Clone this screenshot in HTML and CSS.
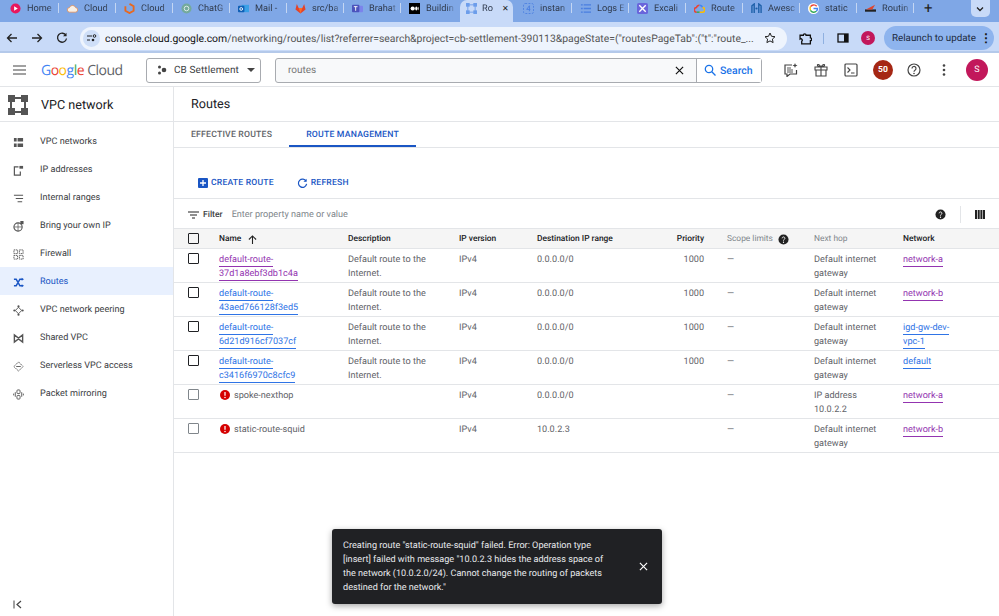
FILE: index.html
```html
<!DOCTYPE html>
<html>
<head>
	<title>Routes - VPC network</title>
	<link rel="stylesheet" href="styles.css">
</head>
<body>
	<!-- browser tabs -->
	<div class="tab-strip">
		<div class="tab"><svg class="fav" viewBox="0 0 12 12"><circle cx="6" cy="6" r="5.5" fill="#e8175d"/><path d="M4.5 3.5 8.5 6l-4 2.500z" fill="#fff"/></svg><span class="tab-name">Home</span></div>
		<div class="tab"><svg class="fav" viewBox="0 0 12 12"><path d="M3 10a2.500 2.500 0 0 1-.3-5A3.500 3.500 0 0 1 9.300 5 2.500 2.500 0 0 1 9 10z" fill="#f6f0e8" stroke="#e98b4a" stroke-width=".8"/></svg><span class="tab-name">Cloud</span></div>
		<div class="tab"><svg class="fav" viewBox="0 0 12 12"><path d="M6 1 10.500 3.500V8.500L6 11 1.500 8.500V3.500" fill="none" stroke="#e8681e" stroke-width="2"/></svg><span class="tab-name">Cloud</span></div>
		<div class="tab"><svg class="fav" viewBox="0 0 12 12"><circle cx="6" cy="6" r="5.500" fill="#74aa9c"/><circle cx="6" cy="6" r="2.500" fill="none" stroke="#e4f0ec"/></svg><span class="tab-name">ChatG</span></div>
		<div class="tab"><svg class="fav" viewBox="0 0 12 12"><rect x="4" y="2" width="8" height="8" fill="#3ba0e6"/><rect y="3" width="7" height="7" rx="1" fill="#0f5fb5"/><circle cx="3.500" cy="6.500" r="1.500" fill="none" stroke="#fff"/></svg><span class="tab-name">Mail -</span></div>
		<div class="tab"><svg class="fav" viewBox="0 0 12 12"><path d="M6 11.500 .5 7 2 1l2 4.500h4L10 1l1.500 6z" fill="#e24329"/><path d="M6 11.500 4 5.500h4z" fill="#fc6d26"/></svg><span class="tab-name">src/ba</span></div>
		<div class="tab"><svg class="fav" viewBox="0 0 12 12"><rect x="6" y="3" width="6" height="7" rx="1" fill="#7b83eb"/><rect y="2" width="8" height="8" rx="1" fill="#4b53bc"/><path d="M2 4h4M4 4v4.500" stroke="#fff"/></svg><span class="tab-name">Brahat</span></div>
		<div class="tab tab-last"><svg class="fav" viewBox="0 0 12 12"><rect width="12" height="12" fill="#000"/><circle cx="4" cy="6" r="2.300" fill="#fff"/><ellipse cx="8" cy="6" rx="1.200" ry="2.200" fill="#fff"/><ellipse cx="10" cy="6" rx=".5" ry="2" fill="#fff"/></svg><span class="tab-name">Buildin</span></div>
		<div class="tab tab-active"><svg class="fav" viewBox="0 0 12 12"><g fill="#6d9eeb"><rect width="4" height="4"/><rect x="8" width="4" height="4"/><rect y="8" width="4" height="4"/><rect x="8" y="8" width="4" height="4"/></g><path d="M2 2h8v8H2z" fill="none" stroke="#6d9eeb"/></svg><span class="tab-name short">Ro</span><span class="tab-close">✕</span></div>
		<div class="tab"><svg class="fav" viewBox="0 0 12 12"><rect x=".5" y=".5" width="11" height="11" rx="2" fill="none" stroke="#4a7fe0" stroke-dasharray="2 1.500"/><path d="M7 3 4 7h4M7 3v6" fill="none" stroke="#4a7fe0"/></svg><span class="tab-name">instan</span></div>
		<div class="tab"><svg class="fav" viewBox="0 0 12 12"><path d="M1 2h2M1 6h2M1 10h2M4 2h8M4 6h8M4 10h8" stroke="#4a7fe0" stroke-width="1.500"/></svg><span class="tab-name">Logs E</span></div>
		<div class="tab"><svg class="fav" viewBox="0 0 12 12"><rect width="12" height="12" rx="2" fill="#6965db"/><path d="M2.500 2.500l7 7M9.500 2.500l-7 7" stroke="#fff" stroke-width="1.500"/></svg><span class="tab-name">Excali</span></div>
		<div class="tab"><svg class="fav" viewBox="0 0 12 12"><path d="M3 10a2.500 2.500 0 0 1-.3-5A3.500 3.500 0 0 1 6 2.500" fill="none" stroke="#ea4335" stroke-width="1.600"/><path d="M6 2.500A3.500 3.500 0 0 1 9.300 5" fill="none" stroke="#4285f4" stroke-width="1.600"/><path d="M9.300 5A2.500 2.500 0 0 1 9 10H6" fill="none" stroke="#fbbc04" stroke-width="1.600"/><path d="M6 10H3" stroke="#34a853" stroke-width="1.600"/></svg><span class="tab-name">Route</span></div>
		<div class="tab"><svg class="fav" viewBox="0 0 12 12"><path d="M1 11V3l2.500-2v10M11 11V3L8.500 1v10" fill="none" stroke="#1c5fa8" stroke-width="1.500"/><circle cx="6" cy="6" r="1.200" fill="#1c5fa8"/></svg><span class="tab-name">Awesc</span></div>
		<div class="tab"><svg class="fav" viewBox="0 0 12 12"><circle cx="6" cy="6" r="6" fill="#fff"/><path d="M9.500 3.500A4.300 4.300 0 0 0 2.700 4" fill="none" stroke="#ea4335" stroke-width="1.600"/><path d="M2.700 4a4.300 4.300 0 0 0 0 4" fill="none" stroke="#fbbc04" stroke-width="1.600"/><path d="M2.700 8a4.300 4.300 0 0 0 6.500 1" fill="none" stroke="#34a853" stroke-width="1.600"/><path d="M9.200 9a4.300 4.300 0 0 0 1.100-3H6" fill="none" stroke="#4285f4" stroke-width="1.600"/></svg><span class="tab-name">static</span></div>
		<div class="tab"><svg class="fav" viewBox="0 0 12 12"><path d="M0 7h12v2.500H0z" fill="#222"/><path d="M1 7 11 2 8 7z" fill="#e0452c"/></svg><span class="tab-name">Routin</span></div>
		<span class="tab-plus">+</span>
		<span class="tab-menu"><svg width="8" height="8" viewBox="0 0 8 8"><path d="M1 2.500 4 5.500 7 2.500" fill="none" stroke="#222" stroke-width="1.300"/></svg></span>
	</div>

	<!-- browser toolbar -->
	<div class="toolbar">
		<svg class="nav-btn" viewBox="0 0 12 12"><path d="M11 6H1.500M5.500 2 1.500 6l4 4" fill="none" stroke="#222" stroke-width="1.300"/></svg>
		<svg class="nav-btn" viewBox="0 0 12 12"><path d="M1 6h9.500M6.500 2l4 4-4 4" fill="none" stroke="#222" stroke-width="1.300"/></svg>
		<svg class="nav-btn" viewBox="0 0 12 12"><path d="M10 3.500A4.500 4.500 0 1 0 10.500 6.500" fill="none" stroke="#222" stroke-width="1.300"/><path d="M10.500 .8v3.400H7z" fill="#222"/></svg>
		<div class="url-bar">
			<span class="site-info"><svg width="10" height="8" viewBox="0 0 10 8"><path d="M0 2h5M0 6h3" stroke="#222"/><circle cx="7.500" cy="2" r="1.300" fill="none" stroke="#222"/><circle cx="6" cy="6" r="1.300" fill="#222"/></svg></span>
			<span class="url-text"><b>console.cloud.google.com</b>/networking/routes/list?referrer=search&amp;project=cb-settlement-390113&amp;pageState=("routesPageTab":("t":"route_...</span>
			<svg class="star" viewBox="0 0 12 12"><path d="M6 1l1.500 3.300 3.500.4-2.600 2.400.7 3.500L6 8.900l-3.100 1.700.7-3.500L1 4.700l3.500-.4z" fill="none" stroke="#222"/></svg>
		</div>
		<svg class="ext-btn" viewBox="0 0 12 12"><path d="M1 3h3a1 1 0 0 1 2.500 0h4v2.500a1.200 1.200 0 0 1 0 2.500v3H2.500V8.500a1.200 1.200 0 0 0-1.500-2z" fill="none" stroke="#111" stroke-width="1.200"/></svg>
		<span class="bar-sep"></span>
		<svg class="panel-btn" viewBox="0 0 12 12"><rect x="1" y="2" width="10" height="8" fill="none" stroke="#111" stroke-width="1.300"/><rect x="7" y="2" width="4" height="8" fill="#111"/></svg>
		<span class="mini-avatar">S</span>
		<span class="relaunch">Relaunch to update<span class="relaunch-dots">⋮</span></span>
	</div>

	<!-- console top bar -->
	<div class="topbar">
		<svg class="hamburger" viewBox="0 0 13 10"><path d="M0 1h13M0 5h13M0 9h13" stroke="#444" stroke-width="1.200"/></svg>
		<div class="logo"><span class="g-blue">G</span><span class="g-red">o</span><span class="g-yellow">o</span><span class="g-blue">g</span><span class="g-green">l</span><span class="g-red">e</span> <span class="logo-cloud">Cloud</span></div>
		<div class="project">
			<svg width="10" height="10" viewBox="0 0 10 10"><circle cx="2.500" cy="2" r="1.500" fill="#444"/><circle cx="2.500" cy="8" r="1.500" fill="#444"/><circle cx="7" cy="5" r="2.300" fill="#444"/></svg>
			<span class="project-name">CB Settlement</span>
			<span class="caret"></span>
		</div>
		<div class="search">
			<span class="search-text">routes</span>
			<svg class="search-clear" viewBox="0 0 10 10"><path d="M1 1l8 8M9 1 1 9" stroke="#111" stroke-width="1.300"/></svg>
			<span class="search-btn"><svg width="12" height="12" viewBox="0 0 12 12"><circle cx="5" cy="5" r="3.700" fill="none" stroke="#1a73e8" stroke-width="1.300"/><path d="M7.800 7.800 11.500 11.500" stroke="#1a73e8" stroke-width="1.300"/></svg>Search</span>
		</div>
		<div class="top-icons">
			<svg class="top-icon" viewBox="0 0 14 14"><path d="M8 2H1v9h2v2.500L6 11h6.500V7" fill="none" stroke="#444" stroke-width="1.200"/><path d="M3 5h4M3 7h6M3 9h6" stroke="#444" stroke-width=".9"/><path d="M11 0l.7 1.800 1.800.7-1.800.7L11 5l-.7-1.800-1.800-.7 1.800-.7z" fill="#444"/></svg>
			<svg class="top-icon" viewBox="0 0 14 14"><path d="M1 4h12v3H1zM2 7h10v6H2zM7 4v9M7 4C5 1 3 1 3.500 2.500 4 4 7 4 7 4c0 0 3 0 3.500-1.500C11 1 9 1 7 4z" fill="none" stroke="#444" stroke-width="1.100"/></svg>
			<svg class="top-icon" viewBox="0 0 14 14"><rect x="1" y="1" width="12" height="12" rx="1" fill="none" stroke="#444" stroke-width="1.200"/><path d="M3.500 4.500 6 7 3.500 9.500M7 10h3.500" fill="none" stroke="#444" stroke-width="1.100"/></svg>
			<span class="badge">50</span>
			<svg class="top-icon" viewBox="0 0 14 14"><circle cx="7" cy="7" r="6" fill="none" stroke="#444" stroke-width="1.200"/><path d="M5 5.500a2 2 0 1 1 3 1.700c-.7.4-1 .8-1 1.600" fill="none" stroke="#444" stroke-width="1.200"/><circle cx="7" cy="10.500" r=".8" fill="#444"/></svg>
			<svg class="top-icon" viewBox="0 0 14 14"><circle cx="7" cy="2.500" r="1.300" fill="#444"/><circle cx="7" cy="7" r="1.300" fill="#444"/><circle cx="7" cy="11.500" r="1.300" fill="#444"/></svg>
			<span class="avatar">S</span>
		</div>
	</div>

	<div class="main">
		<div class="sidebar">
			<div class="side-head">
				<svg width="20" height="20" viewBox="0 0 20 20"><g fill="#555"><rect width="7" height="7"/><rect x="13" width="7" height="7"/><rect y="13" width="7" height="7"/><rect x="13" y="13" width="7" height="7"/><rect x="7" y="2" width="6" height="2"/><rect x="7" y="16" width="6" height="2"/><rect x="2" y="7" width="2" height="6"/><rect x="16" y="7" width="2" height="6"/></g></svg>
				<span class="side-title">VPC network</span>
			</div>
			<a class="side-item"><svg class="side-icon" viewBox="0 0 12 12"><path d="M1 1h3v4H1zM5 1h6v4H5zM1 7h3v4H1zM5 7h6v4H5z" fill="#555"/></svg>VPC networks</a>
			<a class="side-item"><svg class="side-icon" viewBox="0 0 12 12"><path d="M6 2H1.500v9H8V7" fill="none" stroke="#555" stroke-width="1.300"/><rect x="7" y="1" width="4" height="3" fill="#555"/></svg>IP addresses</a>
			<a class="side-item"><svg class="side-icon" viewBox="0 0 12 12"><path d="M1 2.500h10M3 6h8M5 9.500h5" stroke="#555" stroke-width="1.100"/></svg>Internal ranges</a>
			<a class="side-item"><svg class="side-icon" viewBox="0 0 12 12"><circle cx="5.500" cy="6.500" r="4.500" fill="none" stroke="#555" stroke-width="1.200"/><path d="M1 6.500h9M5.500 2v9" stroke="#555" stroke-width=".8"/><rect x="8" y="0" width="3.500" height="3.500" fill="#555"/></svg>Bring your own IP</a>
			<a class="side-item"><svg class="side-icon" viewBox="0 0 12 12"><path d="M1 1h4v4H1zM7 1h4v4H7zM1 7h4v4H1zM7 7h4v4H7z" fill="none" stroke="#555" stroke-dasharray="1.500 .7"/></svg>Firewall</a>
			<a class="side-item side-active"><svg class="side-icon" viewBox="0 0 12 12"><path d="M1 2.500h2.500l4 7H10M1 9.500h2.500l4-7H10" fill="none" stroke="#1a56c4" stroke-width="1.500"/><path d="M9.500 .8 12 2.500 9.500 4.200zM9.500 7.800 12 9.500 9.500 11.200z" fill="#1a56c4"/></svg>Routes</a>
			<a class="side-item"><svg class="side-icon" viewBox="0 0 12 12"><path d="M6 2.500 9.500 6 6 9.500 2.500 6z" fill="none" stroke="#555"/><circle cx="6" cy="1.500" r="1.200" fill="#555"/><circle cx="6" cy="10.500" r="1.200" fill="#555"/><circle cx="1.500" cy="6" r="1.200" fill="#555"/><circle cx="10.500" cy="6" r="1.200" fill="#555"/></svg>VPC network peering</a>
			<a class="side-item"><svg class="side-icon" viewBox="0 0 12 12"><path d="M1.500 2v8L6 6.500 10.500 10V2L6 5.500z" fill="none" stroke="#555" stroke-width="1.500"/></svg>Shared VPC</a>
			<a class="side-item"><svg class="side-icon" viewBox="0 0 12 12"><path d="M6 1 11 6 6 11 1 6z" fill="none" stroke="#555" stroke-dasharray="2 .8"/><path d="M3.500 6h5" stroke="#555"/></svg>Serverless VPC access</a>
			<a class="side-item"><svg class="side-icon" viewBox="0 0 12 12"><path d="M.7 5v2M2.500 3.500v5M9.500 3.500v5M11.300 5v2" stroke="#555"/><rect x="4.300" y="1" width="3.400" height="4" rx="1" fill="none" stroke="#555"/><rect x="4.300" y="7" width="3.400" height="4" rx="1" fill="none" stroke="#555"/></svg>Packet mirroring</a>
			<div class="side-foot"><svg width="9" height="9" viewBox="0 0 9 9"><path d="M1 .5v8" stroke="#444"/><path d="M8 1 4 4.500 8 8" fill="none" stroke="#444" stroke-width="1.200"/></svg></div>
		</div>

		<div class="content">
			<div class="page-title">Routes</div>
			<div class="page-tabs">
				<span class="page-tab">EFFECTIVE ROUTES</span>
				<span class="page-tab page-tab-active">ROUTE MANAGEMENT</span>
			</div>
			<div class="actions">
				<span class="action"><svg width="10" height="10" viewBox="0 0 10 10"><rect width="10" height="10" rx="1" fill="#1a56c4"/><path d="M5 2v6M2 5h6" stroke="#fff" stroke-width="1.300"/></svg>CREATE ROUTE</span>
				<span class="action"><svg width="11" height="11" viewBox="0 0 12 12"><path d="M10 3.500A4.500 4.500 0 1 0 10.500 6.500" fill="none" stroke="#1a56c4" stroke-width="1.300"/><path d="M10.500 .8v3.400H7z" fill="#1a56c4"/></svg>REFRESH</span>
			</div>
			<div class="filter">
				<svg width="11" height="8" viewBox="0 0 11 8"><path d="M0 1h11M2 4h7M4 7h3" stroke="#222" stroke-width="1.200"/></svg>
				<span class="filter-label">Filter</span>
				<span class="filter-hint">Enter property name or value</span>
				<svg class="filter-help" viewBox="0 0 12 12"><circle cx="6" cy="6" r="5.500" fill="#222"/><path d="M4.500 4.700a1.500 1.500 0 1 1 2.300 1.300c-.5.300-.8.600-.8 1.200" fill="none" stroke="#fff" stroke-width="1"/><circle cx="6" cy="9" r=".7" fill="#fff"/></svg>
				<span class="filter-sep"></span>
				<svg class="filter-cols" viewBox="0 0 10 9"><path d="M0 0h2v9H0zM2.700 0h2v9h-2zM5.400 0h2v9h-2zM8 0h2v9H8z" fill="#222"/></svg>
			</div>

			<table class="routes">
				<thead>
					<tr>
						<th class="col-check"><span class="check"></span></th>
						<th class="col-name">Name <svg class="sort" viewBox="0 0 10 10"><path d="M5 10V1M1 5l4-4 4 4" fill="none" stroke="#222" stroke-width="1.200"/></svg></th>
						<th class="col-desc">Description</th>
						<th class="col-ip">IP version</th>
						<th class="col-dest">Destination IP range</th>
						<th class="col-prio">Priority</th>
						<th class="col-scope muted">Scope limits <svg class="head-help" viewBox="0 0 12 12"><circle cx="6" cy="6" r="5.500" fill="#222"/><path d="M4.500 4.700a1.500 1.500 0 1 1 2.300 1.300c-.5.300-.8.600-.8 1.200" fill="none" stroke="#fff" stroke-width="1"/><circle cx="6" cy="9" r=".7" fill="#fff"/></svg></th>
						<th class="col-hop muted">Next hop</th>
						<th class="col-net">Network</th>
					</tr>
				</thead>
				<tbody>
					<tr>
						<td><span class="check"></span></td>
						<td><a class="visited">default-route-37d1a8ebf3db1c4a</a></td>
						<td>Default route to the Internet.</td>
						<td>IPv4</td>
						<td>0.0.0.0/0</td>
						<td class="num">1000</td>
						<td class="scope">—</td>
						<td class="hop">Default internet gateway</td>
						<td class="net"><a class="visited">network-a</a></td>
					</tr>
					<tr>
						<td><span class="check"></span></td>
						<td><a class="link">default-route-43aed766128f3ed5</a></td>
						<td>Default route to the Internet.</td>
						<td>IPv4</td>
						<td>0.0.0.0/0</td>
						<td class="num">1000</td>
						<td class="scope">—</td>
						<td class="hop">Default internet gateway</td>
						<td class="net"><a class="visited">network-b</a></td>
					</tr>
					<tr>
						<td><span class="check"></span></td>
						<td><a class="link">default-route-6d21d916cf7037cf</a></td>
						<td>Default route to the Internet.</td>
						<td>IPv4</td>
						<td>0.0.0.0/0</td>
						<td class="num">1000</td>
						<td class="scope">—</td>
						<td class="hop">Default internet gateway</td>
						<td class="net"><a class="link">igd-gw-dev-vpc-1</a></td>
					</tr>
					<tr>
						<td><span class="check"></span></td>
						<td><a class="link">default-route-c3416f6970c8cfc9</a></td>
						<td>Default route to the Internet.</td>
						<td>IPv4</td>
						<td>0.0.0.0/0</td>
						<td class="num">1000</td>
						<td class="scope">—</td>
						<td class="hop">Default internet gateway</td>
						<td class="net"><a class="link">default</a></td>
					</tr>
					<tr>
						<td><span class="check check-off"></span></td>
						<td><svg class="err" viewBox="0 0 12 12"><circle cx="6" cy="6" r="6" fill="#d50000"/><path d="M6 2.500v4.500" stroke="#fff" stroke-width="1.500"/><circle cx="6" cy="9" r=".9" fill="#fff"/></svg>spoke-nexthop</td>
						<td></td>
						<td>IPv4</td>
						<td>0.0.0.0/0</td>
						<td class="num"></td>
						<td class="scope">—</td>
						<td class="hop">IP address 10.0.2.2</td>
						<td class="net"><a class="visited">network-a</a></td>
					</tr>
					<tr>
						<td><span class="check check-off"></span></td>
						<td><svg class="err" viewBox="0 0 12 12"><circle cx="6" cy="6" r="6" fill="#d50000"/><path d="M6 2.500v4.500" stroke="#fff" stroke-width="1.500"/><circle cx="6" cy="9" r=".9" fill="#fff"/></svg>static-route-squid</td>
						<td></td>
						<td>IPv4</td>
						<td>10.0.2.3</td>
						<td class="num"></td>
						<td class="scope">—</td>
						<td class="hop">Default internet gateway</td>
						<td class="net"><a class="visited">network-b</a></td>
					</tr>
				</tbody>
			</table>
		</div>
	</div>

	<div class="toast">
		<div class="toast-text">Creating route "static-route-squid" failed. Error: Operation type [insert] failed with message "10.0.2.3 hides the address space of the network (10.0.2.0/24). Cannot change the routing of packets destined for the network."</div>
		<svg class="toast-close" viewBox="0 0 10 10"><path d="M1 1l8 8M9 1 1 9" stroke="#fff" stroke-width="1.300"/></svg>
	</div>
</body>
</html>
```

FILE: styles.css
```css
html, body {
	margin: 0;
	padding: 0;
	width: 999px;
	height: 616px;
	overflow: hidden;
}

body {
	display: flex;
	flex-direction: column;
	position: relative;
	font-family: "Roboto", "Liberation Sans", sans-serif;
	font-size: 10px;
	color: #5f6368;
	background-color: #fff;
	text-rendering: geometricPrecision;
}

/* browser tabs */
.tab-strip {
	display: flex;
	align-items: flex-start;
	height: 22px;
	padding-left: 2px;
	background-color: #7fa7e6;
	flex-shrink: 0;
}

.tab {
	display: flex;
	align-items: center;
	gap: 6px;
	width: 57px;
	height: 16px;
	padding-left: 8px;
	box-sizing: border-box;
	background: linear-gradient(#c4d6f3, #c4d6f3) right center / 1px 10px no-repeat;
	overflow: hidden;
	flex-shrink: 0;
}

.tab-last {
	background: none;
}

.fav {
	width: 11px;
	height: 11px;
	flex-shrink: 0;
}

.tab-name {
	font-size: 9.2px;
	color: #2f3a4c;
	white-space: nowrap;
	width: 30px;
	overflow: hidden;
	-webkit-mask-image: linear-gradient(90deg, #000 70%, transparent);
	mask-image: linear-gradient(90deg, #000 70%, transparent);
}

.tab-active {
	width: 53px;
	height: 22px;
	margin: 0 2px;
	padding: 0 0 5px 6px;
	background: #c8daf8;
	border-radius: 7px 7px 0 0;
	gap: 5px;
}

.tab-name.short {
	width: 15px;
}

.tab-close {
	font-size: 8px;
	color: #222;
}

.tab-plus {
	margin-left: 10px;
	font-size: 15px;
	line-height: 16px;
	color: #222;
}

.tab-menu {
	display: flex;
	align-items: center;
	justify-content: center;
	width: 19px;
	height: 17px;
	margin-left: 38px;
	background-color: #c8daf8;
	border-radius: 0 0 5px 5px;
}

/* browser toolbar */
.toolbar {
	display: flex;
	align-items: center;
	height: 31px;
	padding: 3px 0 0 6px;
	box-sizing: border-box;
	background-color: #c8daf8;
	border-bottom: 2px solid #b4c9ea;
	flex-shrink: 0;
}

.nav-btn {
	width: 12px;
	height: 12px;
	margin-right: 13px;
	flex-shrink: 0;
}

.url-bar {
	display: flex;
	align-items: center;
	width: 707px;
	height: 23px;
	margin-left: -1px;
	background-color: #eef4fd;
	border-radius: 12px;
	box-sizing: border-box;
	padding-left: 3px;
	flex-shrink: 0;
}

.site-info {
	display: flex;
	align-items: center;
	justify-content: center;
	width: 17px;
	height: 17px;
	background-color: #cfdff8;
	border-radius: 50%;
	flex-shrink: 0;
}

.url-text {
	margin-left: 5px;
	font-size: 10.4px;
	color: #555;
	white-space: nowrap;
	overflow: hidden;
	width: 657px;
}

.url-text b {
	font-weight: 400;
	color: #111;
}

.star {
	width: 12px;
	height: 12px;
	margin-left: 2px;
	flex-shrink: 0;
}

.ext-btn {
	width: 13px;
	height: 13px;
	margin-left: 12px;
	flex-shrink: 0;
}

.bar-sep {
	width: 1px;
	height: 11px;
	margin-left: 11px;
	background-color: #8fb0e0;
}

.panel-btn {
	width: 12px;
	height: 12px;
	margin-left: 13px;
	flex-shrink: 0;
}

.mini-avatar {
	display: flex;
	align-items: center;
	justify-content: center;
	width: 14px;
	height: 14px;
	margin-left: 12px;
	background-color: #c2185b;
	color: #fff;
	font-size: 6px;
	border-radius: 50%;
	flex-shrink: 0;
}

.relaunch {
	display: flex;
	align-items: center;
	justify-content: space-between;
	width: 110px;
	height: 24px;
	margin-left: 9px;
	padding: 0 2px 0 8px;
	box-sizing: border-box;
	background-color: #8eb4ee;
	color: #1c2a40;
	font-size: 9.8px;
	border-radius: 12px;
	white-space: nowrap;
	flex-shrink: 0;
}

.relaunch-dots {
	font-size: 12px;
	color: #111;
	font-weight: 700;
}

/* console top bar */
.topbar {
	display: flex;
	align-items: center;
	height: 34px;
	box-sizing: border-box;
	border-bottom: 1px solid #e3e5e8;
	padding: 1px 0 0 13px;
	flex-shrink: 0;
}

.hamburger {
	width: 13px;
	height: 10px;
	flex-shrink: 0;
}

.logo {
	width: 92px;
	margin-left: 15px;
	font-family: "Open Sans", sans-serif;
	font-size: 14px;
	letter-spacing: -0.5px;
	white-space: nowrap;
}

.g-blue { color: #4285f4; }
.g-red { color: #ea4335; }
.g-yellow { color: #fbbc04; }
.g-green { color: #34a853; }
.logo-cloud { color: #5f6368; }

.project {
	display: flex;
	align-items: center;
	width: 115px;
	height: 25px;
	margin-left: 13px;
	padding-left: 10px;
	box-sizing: border-box;
	border: 1px solid #a8abb0;
	border-radius: 3px;
	color: #3c4043;
	flex-shrink: 0;
}

.project-name {
	margin-left: 7px;
	font-size: 10px;
	letter-spacing: .1px;
	white-space: nowrap;
}

.caret {
	margin-left: 8px;
	border-left: 4px solid transparent;
	border-right: 4px solid transparent;
	border-top: 4px solid #444;
}

.search {
	display: flex;
	align-items: center;
	width: 487px;
	height: 25px;
	margin-left: 14px;
	box-sizing: border-box;
	border: 1px solid #a8abb0;
	border-radius: 3px;
	background-color: #f8f9fa;
	flex-shrink: 0;
}

.search-text {
	margin-left: 12px;
	font-size: 10px;
	color: #777;
	flex: 1;
}

.search-clear {
	width: 9px;
	height: 9px;
	margin-right: 12px;
}

.search-btn {
	display: flex;
	align-items: center;
	gap: 4px;
	height: 23px;
	width: 65px;
	padding-left: 7px;
	box-sizing: border-box;
	background-color: #fff;
	border-left: 1px solid #a8abb0;
	color: #1a73e8;
	font-size: 10.5px;
	font-weight: 500;
}

.top-icons {
	display: flex;
	align-items: center;
	margin-left: 22px;
}

.top-icon {
	width: 14px;
	height: 14px;
	margin-right: 16px;
	flex-shrink: 0;
}

.badge {
	display: flex;
	align-items: center;
	justify-content: center;
	width: 20px;
	height: 20px;
	margin-right: 14px;
	margin-left: -1px;
	background-color: #a52714;
	color: #fff;
	font-size: 8.5px;
	font-weight: 700;
	border-radius: 50%;
}

.avatar {
	display: flex;
	align-items: center;
	justify-content: center;
	width: 22px;
	height: 22px;
	margin-left: -1px;
	background-color: #c2185b;
	color: #fff;
	font-size: 9px;
	border-radius: 50%;
}

/* layout below the bars */
.main {
	display: flex;
	flex: 1;
	min-height: 0;
}

.sidebar {
	display: flex;
	flex-direction: column;
	width: 174px;
	box-sizing: border-box;
	border-right: 1px solid #e3e5e8;
	flex-shrink: 0;
}

.side-head {
	display: flex;
	align-items: center;
	gap: 13px;
	height: 35px;
	padding: 2px 0 0 8px;
	box-sizing: border-box;
	border-bottom: 1px solid #e3e5e8;
	margin-bottom: 5px;
	flex-shrink: 0;
}

.side-title {
	font-size: 12.6px;
	color: #202124;
}

.side-item {
	display: flex;
	align-items: center;
	height: 28px;
	padding: 2px 0 0 13px;
	box-sizing: border-box;
	color: #3c4043;
	font-size: 9.1px;
	white-space: nowrap;
	flex-shrink: 0;
}

.side-icon {
	width: 11px;
	height: 11px;
	margin-right: 16px;
	flex-shrink: 0;
}

.side-active {
	background-color: #e8f0fe;
	color: #1a56c4;
}

.side-foot {
	margin-top: auto;
	padding: 0 0 4px 13px;
}

.content {
	flex: 1;
	min-width: 0;
}

.page-title {
	height: 35px;
	padding-left: 17px;
	box-sizing: border-box;
	border-bottom: 1px solid #e3e5e8;
	font-size: 12.6px;
	line-height: 35px;
	color: #202124;
}

.page-tabs {
	display: flex;
	height: 26px;
	box-sizing: border-box;
	border-bottom: 1px solid #e3e5e8;
}

.page-tab {
	padding: 0 17px;
	font-size: 8.7px;
	font-weight: 500;
	line-height: 27px;
	letter-spacing: .2px;
	color: #5f6368;
	white-space: nowrap;
}

.page-tab-active {
	height: 25px;
	box-sizing: border-box;
	border-bottom: 2px solid #1a56c4;
	color: #1a56c4;
}

.actions {
	display: flex;
	align-items: center;
	gap: 23px;
	height: 51px;
	padding: 20px 0 0 24px;
	box-sizing: border-box;
	border-bottom: 1px solid #e3e5e8;
}

.action {
	display: flex;
	align-items: center;
	gap: 3px;
	color: #1a56c4;
	font-size: 8.6px;
	font-weight: 500;
	letter-spacing: .2px;
	white-space: nowrap;
}

.filter {
	display: flex;
	align-items: center;
	height: 29px;
	padding: 2px 0 0 14px;
	box-sizing: border-box;
}

.filter-label {
	margin-left: 4px;
	font-size: 8.6px;
	font-weight: 500;
	color: #3c4043;
}

.filter-hint {
	margin-left: 9px;
	font-size: 9.1px;
	color: #80868b;
	flex: 1;
}

.filter-help {
	width: 11px;
	height: 11px;
}

.filter-sep {
	width: 1px;
	height: 17px;
	margin: 0 14px;
	background-color: #e3e5e8;
}

.filter-cols {
	width: 10px;
	height: 9px;
	margin-right: 14px;
}

/* routes table */
.routes {
	width: 825px;
	table-layout: fixed;
	border-collapse: collapse;
}

.routes th {
	height: 20px;
	padding: 0;
	background-color: #f5f5f5;
	border-top: 1px solid #e3e5e8;
	border-bottom: 1px solid #e3e5e8;
	box-sizing: border-box;
	text-align: left;
	font-size: 8.4px;
	font-weight: 500;
	color: #202124;
	white-space: nowrap;
}

.routes td {
	height: 34px;
	padding: 4px 0 1px;
	box-sizing: border-box;
	border-bottom: 1px solid #e3e5e8;
	vertical-align: top;
	font-size: 9.1px;
	line-height: 14px;
	color: #5f6368;
}

.routes td:first-child,
.routes th:first-child {
	padding-left: 14px;
}

.col-check { width: 45px; }
.col-name { width: 129px; }
.col-desc { width: 111px; }
.col-ip { width: 78px; }
.col-dest { width: 127px; }
.routes th.col-prio { width: 40px; text-align: right; }
.routes th.col-scope { width: 110px; padding-left: 23px; }
.col-hop { width: 89px; }
.col-net { width: 96px; }

.routes th.muted {
	color: #80868b;
	font-weight: 400;
}

.routes td.num {
	text-align: right;
}

.routes td.scope {
	padding-left: 23px;
}

.routes td.hop {
	padding-right: 22px;
}

.routes td.net {
	padding-right: 40px;
}

.check {
	display: block;
	width: 9px;
	height: 9px;
	border: 1.5px solid #202124;
	border-radius: 1px;
}

.check-off {
	border-color: #80868b;
}

.sort {
	width: 9px;
	height: 9px;
	margin: -2px 0 -2px 5px;
	vertical-align: -1px;
}

.head-help {
	width: 11px;
	height: 11px;
	margin: -3px 0 -3px 3px;
	vertical-align: -1px;
}

.err {
	width: 10px;
	height: 10px;
	margin: 0 4px 0 1px;
	vertical-align: -1.500px;
}

.link,
.visited {
	padding-bottom: 1px;
	border-bottom: 1px solid;
}

.link {
	color: #2f74e6;
}

.visited {
	color: #9334b0;
}

/* error snackbar */
.toast {
	position: absolute;
	left: 332px;
	top: 529px;
	display: flex;
	align-items: center;
	width: 330px;
	height: 75px;
	padding: 0 14px 0 11px;
	box-sizing: border-box;
	background-color: #202124;
	border-radius: 3px;
	box-shadow: 0 2px 6px rgba(0, 0, 0, .35);
}

.toast-text {
	width: 270px;
	flex-shrink: 0;
	color: #e8eaed;
	font-size: 9.1px;
	line-height: 14px;
}

.toast-close {
	width: 9px;
	height: 9px;
	margin-left: 26px;
}
```
